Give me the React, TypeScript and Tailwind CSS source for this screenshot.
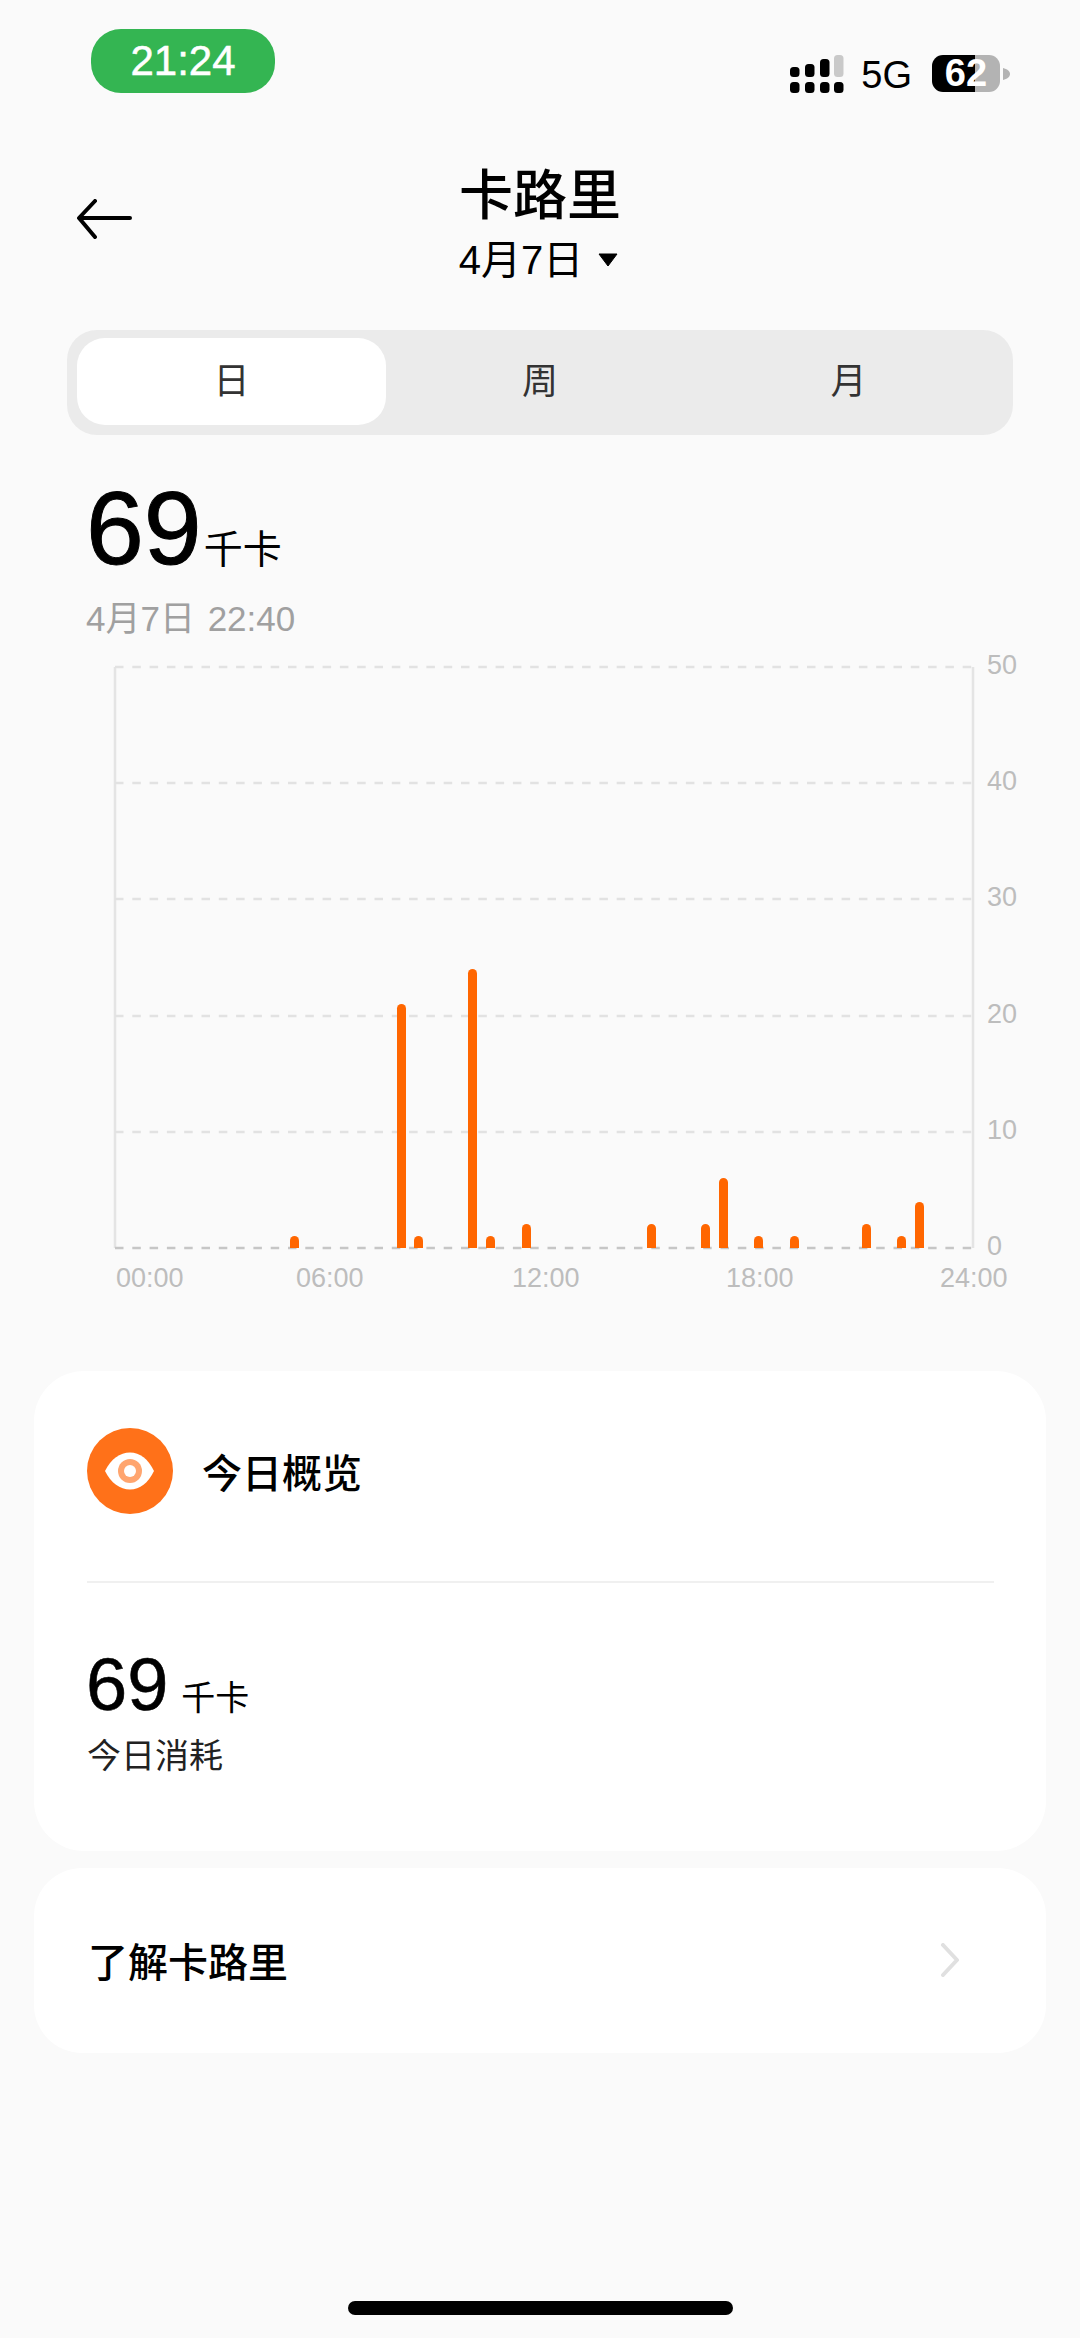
const bars = [
  { x: 290, top: 1236 },
  { x: 397, top: 1004 },
  { x: 414, top: 1236 },
  { x: 468, top: 969 },
  { x: 486, top: 1236 },
  { x: 522, top: 1224 },
  { x: 647, top: 1224 },
  { x: 701, top: 1224 },
  { x: 719, top: 1178 },
  { x: 754, top: 1236 },
  { x: 790, top: 1236 },
  { x: 862, top: 1224 },
  { x: 897, top: 1236 },
  { x: 915, top: 1202 },
];

const yLabels = [
  { label: "50", y: 667 },
  { label: "40", y: 783 },
  { label: "30", y: 899 },
  { label: "20", y: 1016 },
  { label: "10", y: 1132 },
  { label: "0", y: 1248 },
];

const xLabels = [
  { label: "00:00", x: 116 },
  { label: "06:00", x: 296 },
  { label: "12:00", x: 512 },
  { label: "18:00", x: 726 },
  { label: "24:00", x: 940 },
];

// chart svg starts at y=650 on the page, so subtract that offset
const CHART_TOP = 650;

function StatusIcons() {
  return (
    <div className="mt-[24px] mr-[70px] flex items-center">
      <svg width="54" height="38" viewBox="0 0 54 38" className="mr-[17px]">
        <rect x="0" y="12" width="9.5" height="10" rx="3.5" fill="#000" />
        <rect x="15" y="9" width="9.5" height="13" rx="3.5" fill="#000" />
        <rect x="30" y="4" width="9.5" height="18" rx="3.5" fill="#000" />
        <rect x="44" y="0" width="9.5" height="22" rx="3.5" fill="#c9c9c9" />
        <rect x="0" y="27" width="9.5" height="11" rx="3.5" fill="#000" />
        <rect x="15" y="27" width="9.5" height="11" rx="3.5" fill="#000" />
        <rect x="30" y="27" width="9.5" height="11" rx="3.5" fill="#000" />
        <rect x="44" y="27" width="9.5" height="11" rx="3.5" fill="#000" />
      </svg>
      <span className="mt-[3px] text-[38px] leading-[38px] text-black">5G</span>
      <div className="ml-[20px] flex h-[37px] w-[68px] items-center justify-center rounded-[11px] bg-[linear-gradient(90deg,#000_63%,#b3b3b3_63%)] text-[38px] font-bold leading-[37px] text-white">
        62
      </div>
      <svg width="7" height="12" viewBox="0 0 7 12" className="ml-[3px]">
        <path d="M0 0 C4 1 7 3 7 6 C7 9 4 11 0 12 Z" fill="#b3b3b3" />
      </svg>
    </div>
  );
}

function Chart() {
  return (
    <svg width="1080" height="650" viewBox={`0 ${CHART_TOP} 1080 650`} className="block">
      <line x1="115" y1="667" x2="115" y2="1248" stroke="#e4e4e4" strokeWidth="2.5" />
      <line x1="973" y1="667" x2="973" y2="1248" stroke="#e4e4e4" strokeWidth="2.5" />
      {yLabels.map((item) => (
        <line
          key={item.label}
          x1="115"
          y1={item.y}
          x2="973"
          y2={item.y}
          stroke={item.label === "0" ? "#c6c6c6" : "#e2e2e2"}
          strokeWidth="2.5"
          strokeDasharray="8.5 8.8"
        />
      ))}
      {bars.map((bar) => (
        <path
          key={bar.x}
          d={`M${bar.x} 1248 V${bar.top + 4.5} a4.5 4.5 0 0 1 9 0 V1248 Z`}
          fill="#ff6600"
        />
      ))}
      {yLabels.map((item) => (
        <text key={item.label} x="987" y={item.y + 7} fontSize="27" fill="#bdbdbd">
          {item.label}
        </text>
      ))}
      {xLabels.map((item) => (
        <text key={item.label} x={item.x} y="1287" fontSize="27" fill="#bdbdbd">
          {item.label}
        </text>
      ))}
    </svg>
  );
}

export default function App() {
  return (
    <div className="flex h-[2338px] w-[1080px] flex-col overflow-hidden bg-[#fafafa] font-['Liberation_Sans','Noto_Sans_CJK_SC',sans-serif] text-black">
      <div className="flex h-[93px] items-start justify-between pt-[29px]">
        <div className="ml-[91px] flex h-[64px] w-[184px] items-center justify-center rounded-[30px] bg-[#34b552] text-[42px] leading-[64px] text-white [-webkit-text-stroke:0.5px_#fff]">
          21:24
        </div>
        <StatusIcons />
      </div>

      <div className="mt-[71px] grid grid-cols-[1fr_auto_1fr] items-center">
        <svg width="56" height="40" viewBox="0 0 56 40" className="mb-[11px] ml-[76px]" fill="none">
          <path
            d="M54 19 H4 M19 2 L3 19 L19 38"
            stroke="#000"
            strokeWidth="4"
            strokeLinecap="round"
            strokeLinejoin="round"
          />
        </svg>
        <div className="flex flex-col items-center">
          <div className="text-[54px] font-medium leading-[64px]">卡路里</div>
          <div className="mt-[8px] mr-[3px] flex items-center text-[40px] leading-[48px]">
            <span>4月7日</span>
            <svg width="20" height="14" viewBox="0 0 20 14" className="ml-[15px]">
              <path d="M1 1 H19 L10 13 Z" fill="#000" stroke="#000" strokeLinejoin="round" />
            </svg>
          </div>
        </div>
        <div />
      </div>

      <div className="mx-[67px] mt-[46px] flex h-[105px] rounded-[30px] bg-[#ebebeb] pt-[8px] pr-[10px] pb-[10px] pl-[10px] text-[36px] text-[#333333]">
        <div className="flex w-[309px] items-center justify-center rounded-[28px] bg-white">日</div>
        <div className="flex w-[308px] items-center justify-center">周</div>
        <div className="flex w-[309px] items-center justify-center">月</div>
      </div>

      <div className="ml-[86px] mt-[43px] flex items-baseline">
        <span className="text-[104px] leading-[100px] [-webkit-text-stroke:1px_#000]">69</span>
        <span className="relative -top-[1px] ml-[2px] text-[39px]">千卡</span>
      </div>
      <div className="ml-[86px] mt-[18px] text-[35px] leading-[40px] text-[#a0a0a0] [word-spacing:3px]">4月7日 22:40</div>

      <div className="mt-[11px]">
        <Chart />
      </div>

      <div className="mx-[34px] mt-[71px] h-[480px] rounded-[50px] bg-white pl-[53px] pr-[52px]">
        <div className="flex items-center pt-[57px]">
          <svg width="86" height="86" viewBox="0 0 86 86">
            <circle cx="43" cy="43" r="43" fill="#ff7119" />
            <path
              d="M18 43 C24 31 33 24.5 43 24.5 C53 24.5 61 31 67 43 C61 55 53 61.5 43 61.5 C33 61.5 24 55 18 43 Z"
              fill="#fff"
            />
            <circle cx="43" cy="43" r="12" fill="#ffa56f" />
            <circle cx="43" cy="43" r="6" fill="#fff" />
          </svg>
          <span className="relative top-[3px] ml-[29px] text-[40px] font-medium leading-[48px]">今日概览</span>
        </div>
        <div className="mt-[67px] h-[2px] bg-[#f0f0f0]" />
        <div className="mt-[62px] flex items-baseline">
          <span className="-ml-[1px] text-[74px] leading-[80px] [-webkit-text-stroke:0.6px_#000]">69</span>
          <span className="ml-[13px] text-[34px]">千卡</span>
        </div>
        <div className="mt-[9px] text-[34px] leading-[44px] text-[#222222]">今日消耗</div>
      </div>

      <div className="mx-[34px] mt-[17px] flex h-[185px] items-center justify-between rounded-[48px] bg-white pl-[54px] pr-[86px]">
        <span className="relative top-[3px] text-[40px] font-medium">了解卡路里</span>
        <svg width="20" height="34" viewBox="0 0 20 34" fill="none">
          <path d="M3 2 L17 17 L3 32" stroke="#e0e0e0" strokeWidth="4" strokeLinecap="round" strokeLinejoin="round" />
        </svg>
      </div>

      <div className="mx-auto mb-[23px] mt-auto h-[14px] w-[385px] rounded-full bg-black" />
    </div>
  );
}
